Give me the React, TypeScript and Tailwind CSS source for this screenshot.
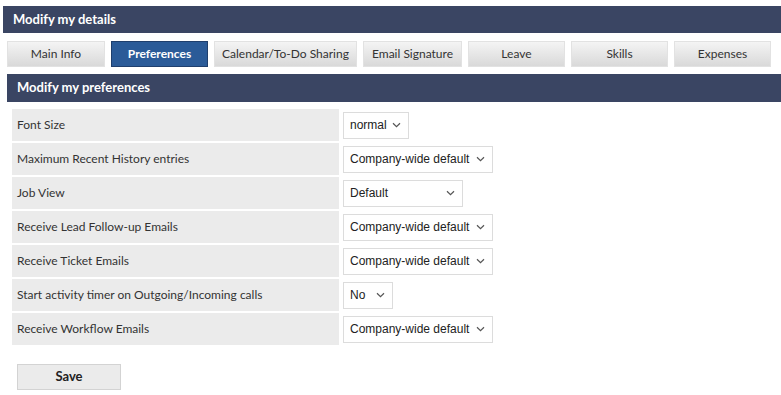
import React from "react";

const tabs = [
  { label: "Main Info", w: "w-[98px]" },
  { label: "Preferences", w: "w-[97px]", active: true },
  { label: "Calendar/To-Do Sharing", w: "w-[143px]" },
  { label: "Email Signature", w: "w-[99px]" },
  { label: "Leave", w: "w-[97px]" },
  { label: "Skills", w: "w-[97px]" },
  { label: "Expenses", w: "w-[97px]" },
];

const prefs = [
  { label: "Font Size", value: "normal", w: "w-[66px]" },
  { label: "Maximum Recent History entries", value: "Company-wide default", w: "w-[150px]" },
  { label: "Job View", value: "Default", w: "w-[120px]" },
  { label: "Receive Lead Follow-up Emails", value: "Company-wide default", w: "w-[150px]" },
  { label: "Receive Ticket Emails", value: "Company-wide default", w: "w-[150px]" },
  { label: "Start activity timer on Outgoing/Incoming calls", value: "No", w: "w-[50px]" },
  { label: "Receive Workflow Emails", value: "Company-wide default", w: "w-[150px]" },
];

function Chevron() {
  return (
    <svg width="9" height="6" viewBox="0 0 9 6" className="shrink-0">
      <path d="M1 1.2 L4.5 4.6 L8 1.2" fill="none" stroke="#555" strokeWidth="1.2" />
    </svg>
  );
}

function FakeSelect({ value, w }: { value: string; w: string }) {
  return (
    <div
      className={`${w} h-[27px] flex items-center justify-between border border-[#dcdcdc] bg-white pl-[6px] pr-[7px] text-[12px] text-[#222] font-['Liberation_Sans',Arial,sans-serif]`}
    >
      <span className="whitespace-nowrap">{value}</span>
      <Chevron />
    </div>
  );
}

function App() {
  return (
    <div className="w-[781px] h-[395px] bg-white font-['Lato',sans-serif] pt-[6px]">
      <div className="ml-[3px] h-[27px] bg-[#3a4563] flex items-center pl-[10px] text-[13px] font-bold text-white">
        Modify my details
      </div>

      <div className="flex gap-[6px] ml-[7px] mt-[8px]">
        {tabs.map((t) =>
          t.active ? (
            <div
              key={t.label}
              className={`${t.w} h-[26px] flex items-center justify-center border border-[#1f3f6d] bg-[#2b5b98] text-[12px] font-bold text-white`}
            >
              {t.label}
            </div>
          ) : (
            <div
              key={t.label}
              className={`${t.w} h-[26px] flex items-center justify-center border border-[#e2e2e2] bg-gradient-to-b from-[#f4f4f4] to-[#d9d9d9] text-[12px] text-[#333]`}
            >
              {t.label}
            </div>
          )
        )}
      </div>

      <div className="ml-[7px] mt-[7px] h-[28px] bg-[#3a4563] flex items-center pl-[10px] text-[13px] font-bold text-white">
        Modify my preferences
      </div>

      <div className="ml-[12px] mt-[7px] flex flex-col gap-[2px]">
        {prefs.map((p) => (
          <div key={p.label} className="flex gap-[4px] h-[32px]">
            <div className="w-[327px] bg-[#ebebeb] flex items-center pl-[5px] text-[12px] text-[#333]">
              {p.label}
            </div>
            <div className="flex items-center">
              <FakeSelect value={p.value} w={p.w} />
            </div>
          </div>
        ))}
      </div>

      <div className="ml-[17px] mt-[18px]">
        <button className="w-[104px] h-[26px] bg-[#ebebeb] border border-[#d3d3d3] text-[13px] font-bold text-[#222]">
          Save
        </button>
      </div>
    </div>
  );
}

export default App;
